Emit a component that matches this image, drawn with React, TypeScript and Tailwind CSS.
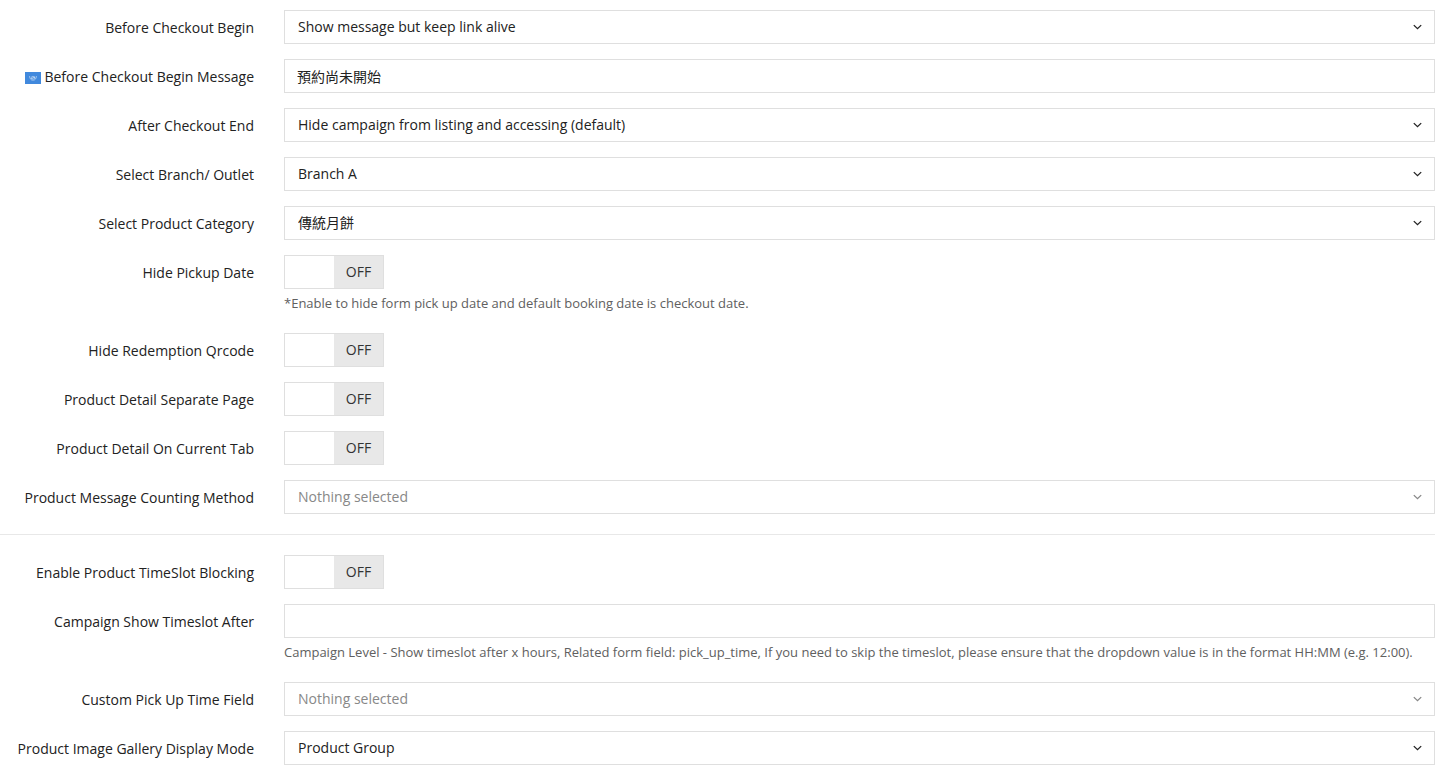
import { useId, useState, type ReactNode } from "react";

function UnFlag() {
  return (
    <svg viewBox="0 0 16 12" className="mr-[3px] inline-block h-3 w-4 align-[-2px]" aria-hidden="true">
      <rect width="16" height="12" fill="#4189dd" />
      <g fill="none" stroke="#ffffff" strokeLinecap="round">
        <path
          d="M4.6 4.4C4.6 6.4 5.6 7.8 7.4 8.3M11.4 4.4c0 2-1 3.4-2.8 3.9"
          strokeOpacity="0.6"
          strokeWidth="0.8"
        />
        <ellipse cx="8" cy="5.8" rx="1.7" ry="1.5" strokeOpacity="0.7" strokeWidth="0.6" />
        <path d="M6.9 6.4 9.2 5" strokeOpacity="0.8" strokeWidth="0.7" />
      </g>
    </svg>
  );
}

type RowProps = {
  id: string;
  label: string;
  flag?: boolean;
  help?: string;
  children: ReactNode;
};

function Row({ id, label, flag, help, children }: RowProps) {
  return (
    <div className="flex gap-[30px]">
      <label htmlFor={id} className="w-[254px] shrink-0 pt-2 text-right leading-5 whitespace-nowrap">
        {flag && <UnFlag />}
        {label}
      </label>
      <div className="min-w-0 flex-1">
        {children}
        {help && <p className="pt-[5px] pb-1.5 text-[13px] leading-[18px] text-[#606060]">{help}</p>}
      </div>
    </div>
  );
}

type SelectRowProps = { label: string; value?: string };

function SelectRow({ label, value }: SelectRowProps) {
  const id = useId();
  return (
    <Row id={id} label={label}>
      <div className={value ? "relative text-[#222222]" : "relative text-[#888888]"}>
        <select
          id={id}
          className="block h-[34px] w-full appearance-none border border-[#dfdfdf] bg-white pr-8 pl-[13px] leading-5 outline-none focus:border-[#999999]"
        >
          <option>{value ?? "Nothing selected"}</option>
        </select>
        <svg
          viewBox="0 0 9 6"
          className="pointer-events-none absolute top-[14px] right-[13px] h-1.5 w-[9px]"
          fill="none"
          stroke="currentColor"
          strokeWidth="1.3"
          aria-hidden="true"
        >
          <path d="M0.8 1.1 4.5 4.7 8.2 1.1" />
        </svg>
      </div>
    </Row>
  );
}

type InputRowProps = { label: string; value?: string; flag?: boolean; help?: string };

function InputRow({ label, value = "", flag, help }: InputRowProps) {
  const id = useId();
  return (
    <Row id={id} label={label} flag={flag} help={help}>
      <input
        id={id}
        type="text"
        defaultValue={value}
        className="block h-[34px] w-full border border-[#dfdfdf] bg-white px-3 leading-5 outline-none focus:border-[#999999]"
      />
    </Row>
  );
}

function ToggleRow({ label, help }: { label: string; help?: string }) {
  const id = useId();
  const [on, setOn] = useState(false);
  return (
    <Row id={id} label={label} help={help}>
      <label className="relative flex h-[34px] w-[100px] cursor-pointer border border-[#dfdfdf] bg-white leading-8 text-[#333333] focus-within:border-[#999999]">
        <input
          id={id}
          type="checkbox"
          aria-label={label}
          checked={on}
          onChange={(e) => setOn(e.target.checked)}
          className="sr-only"
        />
        {on && <span className="flex-1 bg-[#337ab7] text-center text-white">ON</span>}
        <span className="flex-1" />
        {!on && <span className="flex-1 bg-[#e8e8e8] text-center">OFF</span>}
      </label>
    </Row>
  );
}

export default function App() {
  return (
    <form className="min-h-screen bg-white pt-2.5 pr-[13px] pb-2 font-['Open_Sans','Noto_Sans_CJK_TC',sans-serif] text-sm text-[#222222]">
      <div className="flex flex-col gap-[15px]">
        <SelectRow label="Before Checkout Begin" value="Show message but keep link alive" />
        <InputRow label="Before Checkout Begin Message" value="預約尚未開始" flag />
        <SelectRow label="After Checkout End" value="Hide campaign from listing and accessing (default)" />
        <SelectRow label="Select Branch/ Outlet" value="Branch A" />
        <SelectRow label="Select Product Category" value="傳統月餅" />
        <ToggleRow
          label="Hide Pickup Date"
          help="*Enable to hide form pick up date and default booking date is checkout date."
        />
        <ToggleRow label="Hide Redemption Qrcode" />
        <ToggleRow label="Product Detail Separate Page" />
        <ToggleRow label="Product Detail On Current Tab" />
        <SelectRow label="Product Message Counting Method" />
      </div>
      <hr className="my-5 border-t border-[#e8e8e8]" />
      <div className="flex flex-col gap-[15px]">
        <ToggleRow label="Enable Product TimeSlot Blocking" />
        <InputRow
          label="Campaign Show Timeslot After"
          help="Campaign Level - Show timeslot after x hours, Related form field: pick_up_time, If you need to skip the timeslot, please ensure that the dropdown value is in the format HH:MM (e.g. 12:00)."
        />
        <SelectRow label="Custom Pick Up Time Field" />
        <SelectRow label="Product Image Gallery Display Mode" value="Product Group" />
      </div>
    </form>
  );
}
